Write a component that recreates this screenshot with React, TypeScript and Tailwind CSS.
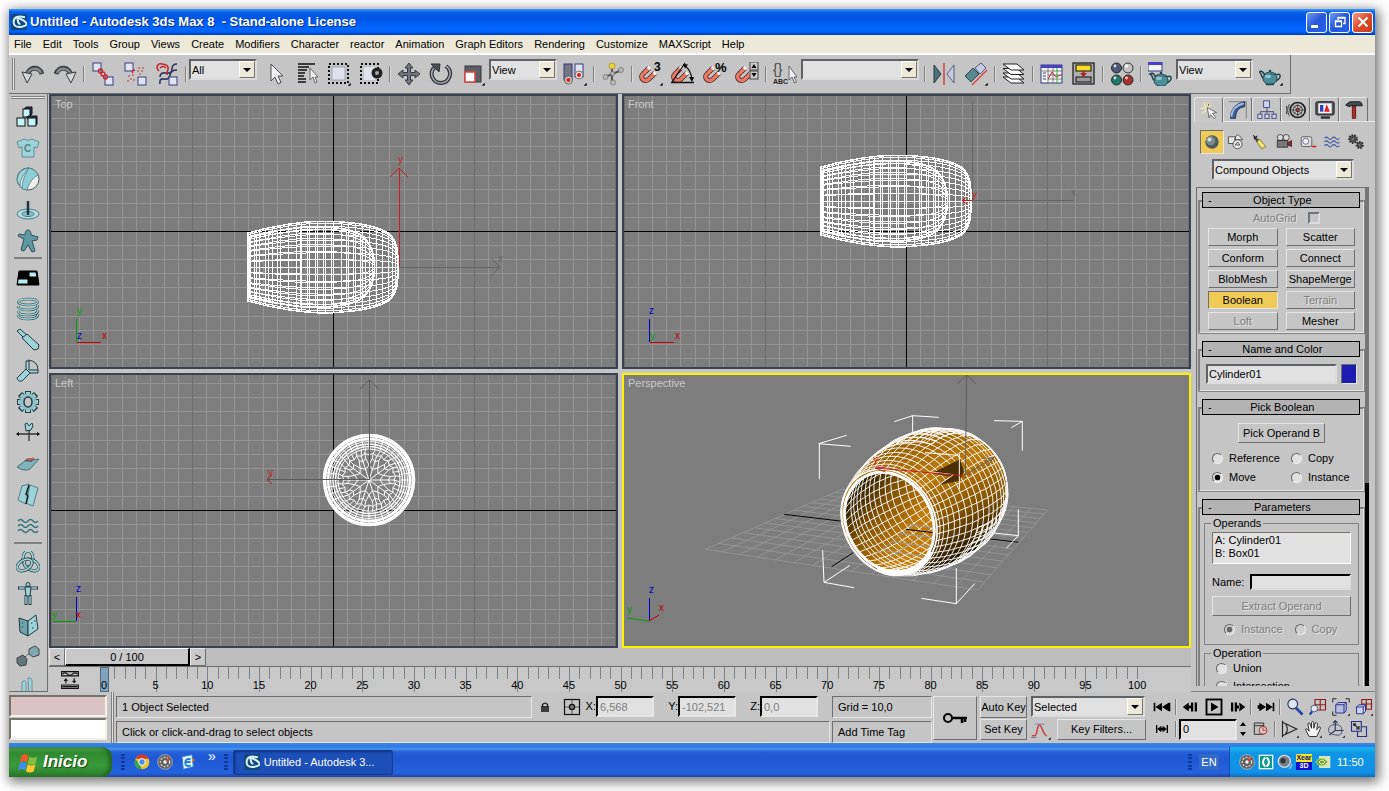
import React from 'react';

const RAISED = 'border border-t-[#e6e6e6] border-l-[#e6e6e6] border-b-[#6e6e6e] border-r-[#6e6e6e]';
const SUNKEN = 'border border-t-[#6e6e6e] border-l-[#6e6e6e] border-b-[#e6e6e6] border-r-[#e6e6e6]';
const FIELD = 'border-2 border-t-[#5f6265] border-l-[#5f6265] border-b-[#dcdcdc] border-r-[#dcdcdc] bg-[#e1e1e1]';

const C = '#9fd3da';
const D = '#21393f';

const Teapot = () => (
  <g>
    <path d="M5 15C3 14 4 10 1 9l2-1c3 1 3 3 4 5M18 12c5-3 6 3 0 6" fill="none" stroke="#1f454c" strokeWidth="1.5" />
    <ellipse cx="12" cy="15.500" rx="7" ry="6" fill="#4b8e98" stroke="#1f454c" />
    <ellipse cx="10" cy="13" rx="3" ry="2" fill="#8fc7cf" />
    <path d="M6 11q6-4 12 0z" fill="#67a8b2" stroke="#1f454c" strokeWidth=".8" />
    <circle cx="12" cy="8" r="1.300" fill="#1f454c" />
    <path d="M8 21.500h8" stroke="#1f454c" strokeWidth="1.500" />
  </g>
);

const Magnet = () => (
  <g fill="none" transform="translate(0 1)">
    <path d="M10 5L4 11c-4 4 2 9 6 5l6-6" stroke="#4a2a26" strokeWidth="5" />
    <path d="M10 5L4 11c-4 4 2 9 6 5l6-6" stroke="#e87863" strokeWidth="3.400" />
    <path d="M9 6l1.800-1.800M14.800 11.200l1.800-1.800" stroke="#f5f5f5" strokeWidth="3.400" />
  </g>
);

const Corner = () => <path d="M24 20v4h-4z" fill="#000" stroke="#fff" strokeWidth=".5" />;

const Box = ({ x, y }: { x: number; y: number }) => (
  <rect x={x} y={y} width="8" height="8" fill="#dfe3f2" stroke="#3a3f7a" />
);

const Wave = ({ c }: { c: string }) => (
  <path d="M2 7q2.500-3 5 0t5 0t5 0t5 0M2 12q2.500-3 5 0t5 0t5 0t5 0M2 17q2.500-3 5 0t5 0t5 0t5 0" fill="none" stroke={c} strokeWidth="1.500" />
);

const icons: Record<string, React.ReactNode> = {
  undo: <g><path d="M6 14C7 5 18 3 21 12" fill="none" stroke="#3b3d40" strokeWidth="5" /><path d="M6 14C7 6 17 4 20 11" fill="none" stroke="#85898d" strokeWidth="2.500" /><path d="M1 10l10 2-5 9z" fill="#d4d7da" stroke="#3b3d40" /></g>,
  redo: <g><path d="M18 14C17 5 6 3 3 12" fill="none" stroke="#3b3d40" strokeWidth="5" /><path d="M18 14C17 6 7 4 4 11" fill="none" stroke="#85898d" strokeWidth="2.500" /><path d="M23 10l-10 2 5 9z" fill="#d4d7da" stroke="#3b3d40" /></g>,
  link: <g><Box x={2} y={1} /><Box x={14} y={15} /><g fill="none" stroke="#c4262b" strokeWidth="1.300"><circle cx="9.500" cy="9" r="2" /><circle cx="12" cy="12" r="2" /><circle cx="14.500" cy="15" r="2" /></g></g>,
  unlink: <g><Box x={2} y={1} /><Box x={15} y={15} /><path d="M10 11q-2-3 2-3" fill="none" stroke="#c4262b" strokeWidth="1.500" /><path d="M15 6h2M19 6h2M14 9h2M18 9h2M16 12h2M5 14h2M9 13h2M7 17h2M4 19h2M10 18h2" stroke="#c0686b" strokeWidth="1.300" /></g>,
  bind: <g fill="none"><path d="M22 2q-5 0-5 5t-6 4-6 4M22 8q-6 0-7 5t-6 4-4 5" stroke="#2b3560" strokeWidth="1.600" /><path d="M4 9C0 5 3 1 7 2s5 0 6 3-2 5-1 8M5 6q3-3 6 0" stroke="#c4262b" strokeWidth="1.600" /><Box x={14} y={15} /></g>,
  arrow: <path d="M8 2v17l4-4 3 7 3-1.500-3-6.500h5z" fill="#f1f1f4" stroke="#4c4c52" />,
  byname: <g><path d="M3 2h17M3 5h11M3 8h9M3 11h7M3 14h6M3 17h8M3 20h8" stroke="#111" strokeWidth="1.400" /><path d="M15 6v12l3-3 2 6 2-1-2-5h3z" fill="#eee" stroke="#4c4c52" strokeWidth=".8" /></g>,
  region: <g><rect x="2" y="2" width="19" height="19" fill="none" stroke="#111" strokeWidth="2" strokeDasharray="2 2" /><rect x="5" y="5" width="13" height="13" fill="#dfe1ec" stroke="#8d90a8" strokeWidth=".7" /><Corner /></g>,
  crossing: <g><rect x="2" y="2" width="17" height="19" fill="none" stroke="#111" strokeWidth="2" strokeDasharray="2 2" /><rect x="5" y="5" width="11" height="13" fill="#dfe1ec" /><circle cx="18" cy="11" r="5.500" fill="#222" /><circle cx="18" cy="11" r="2" fill="#aaa" /></g>,
  move: <path d="M12 1l4 5h-2.500v4.500H18V8l5 4-5 4v-2.500h-4.500V18H16l-4 5-4-5h2.500v-4.500H6V16l-5-4 5-4v2.500h4.500V6H8z" fill="#71747d" stroke="#2f3136" strokeWidth=".9" />,
  rotate: <g fill="none"><path d="M17 4c8 6 3 17-5 17S-1 11 6 5" stroke="#2f3136" strokeWidth="4" /><path d="M17 4c8 6 3 17-5 17S-1 11 6 5" stroke="#a2a5a9" strokeWidth="1.600" /><path d="M2 2l9 0-1 8z" fill="#4c4f54" stroke="#2f3136" /></g>,
  scale: <g><rect x="4" y="4" width="16" height="16" fill="#5d6067" stroke="#33353a" /><rect x="4" y="10" width="10" height="10" fill="#fff" stroke="#e0413c" strokeWidth="1.500" /><Corner /></g>,
  pivot: <g><rect x="1" y="2" width="8" height="16" fill="#74777f" stroke="#333a80" /><rect x="12" y="2" width="8" height="13" fill="#e1e3ee" stroke="#333a80" /><circle cx="5.500" cy="18" r="4" fill="#ccc" stroke="#666" /><circle cx="5.500" cy="18" r="2" fill="#e01c1c" /><circle cx="16" cy="13" r="4" fill="#ddd" stroke="#777" /><circle cx="16" cy="13" r="2" fill="#e01c1c" /><Corner /></g>,
  manip: <g><path d="M11 4v16M4 15l17-7" stroke="#5c5c5c" strokeWidth="2.200" /><circle cx="11" cy="4" r="3" fill="#f2d433" stroke="#8b7a1e" strokeWidth=".6" /><g fill="#bbb" stroke="#666" strokeWidth=".7"><circle cx="20" cy="8" r="2.500" /><circle cx="4.500" cy="15" r="2.500" /><circle cx="12" cy="20.500" r="2.500" /><circle cx="11.500" cy="11.500" r="2" /></g></g>,
  snap: <g><Magnet /><text x="15" y="9" fontSize="12" fontWeight="bold">3</text><Corner /></g>,
  angle: <g><Magnet /><path d="M0 20.500h23M1 20L14 1M14 4q6 4 7 14" fill="none" stroke="#111" strokeWidth="1.300" /><path d="M12 2l5 .5-3 4zM18 15h5l-2 5z" /></g>,
  percent: <g><Magnet /><text x="12" y="10" fontSize="13" fontWeight="bold">%</text></g>,
  spinner: <g><Magnet /><rect x="15" y="0" width="8" height="8" fill="#ccc" stroke="#444" /><rect x="15" y="9" width="8" height="8" fill="#ccc" stroke="#444" /><path d="M16.500 6L19 2l2.500 4zM16.500 11l2.500 4 2.500-4z" /></g>,
  named: <g><text x="0" y="12" fontSize="14" fill="#444">{'{}'}</text><text x="0" y="22" fontSize="7" fontWeight="bold" fill="#222">ABC</text><path d="M16 4v14l3-3 2.500 6 2-1-2.500-5H24z" fill="#f1f1f4" stroke="#55555c" strokeWidth=".9" /></g>,
  mirror: <g><path d="M2 3l7 9-7 9z" fill="#4c7076" stroke="#253b40" /><path d="M22 3l-7 9 7 9z" fill="#c6cbe0" stroke="#5a5f7d" /><path d="M12 1v22" stroke="#cf4a48" strokeWidth="1.600" /></g>,
  align: <g><path d="M1 14l8-8 6 6-8 8z" fill="#5b878e" stroke="#27464c" /><path d="M11 6l6-5 5 5-6 6z" fill="#c6cfe4" stroke="#4c5a80" /><path d="M8 23L23 8" stroke="#e0413c" strokeWidth="1.500" /><Corner /></g>,
  layers: <g fill="#fff" stroke="#222">{[15, 11, 6.500, 2].map((y) => <path key={y} d={`M1 ${y}h14l7 6H9z`} />)}</g>,
  curve: <g><rect x="1" y="3" width="21" height="18" fill="#f4f4f4" stroke="#333a80" /><path d="M1 4.500h21" stroke="#4b3fc5" strokeWidth="3" /><path d="M2 9h20M8 13h14M8 17h14M8 6v15M13 6v15" stroke="#555" strokeWidth=".7" /><path d="M3 11h3M3 14h3M3 17h3" stroke="#333a80" /><path d="M8 17l4-7 4 5 5-2" fill="none" stroke="#d23" /><path d="M17 6v15" stroke="#2ab32a" /></g>,
  schematic: <g><rect x="1" y="1" width="21" height="21" fill="#b0b0b0" stroke="#222" strokeWidth="1.300" /><rect x="4" y="3" width="15" height="6" fill="#f6dd26" stroke="#111" /><rect x="4" y="15" width="15" height="5" fill="#9b9b9b" stroke="#111" /><path d="M11.500 9v3" stroke="#b21f24" strokeWidth="2" /><path d="M8 11h7l-3.500 4z" fill="#b21f24" /></g>,
  material: <g stroke="#111" strokeWidth=".8"><circle cx="6.500" cy="6" r="5" fill="#4e5878" /><circle cx="18" cy="6" r="5" fill="#c3c3c3" /><circle cx="6.500" cy="18" r="5" fill="#23776a" /><circle cx="18" cy="18" r="5" fill="#a6322f" /><g fill="#fff" stroke="none" opacity=".8"><circle cx="5" cy="4" r="1.400" /><circle cx="16.500" cy="4" r="1.800" /><circle cx="5" cy="16" r="1.400" /><circle cx="16.500" cy="16" r="1.400" /></g></g>,
  renderScene: <g><g transform="translate(1 3)"><Teapot /></g><rect x="0" y="0" width="14" height="9" fill="#f4f4f4" stroke="#333a80" /><path d="M0 1.500h14" stroke="#4b3fc5" strokeWidth="3" /></g>,
  render: <g><g transform="translate(-1 1)"><Teapot /></g><Corner /></g>,

  boxes: <g fill="#c3f4f7" stroke="#111"><path d="M8 4l2-2h6v7l-2 2" fill="#335" /><rect x="7" y="4" width="7" height="8" /><path d="M10 13l2-2h9v8l-2 2" fill="#335" /><rect x="1" y="13" width="8" height="8" /><rect x="12" y="13" width="8" height="8" /></g>,
  cloth: <g><path d="M8 3L1 6l2 6 3-1v10h12V11l3 1 2-6-7-3q-4 3-8 0z" fill={C} stroke="#5b8f99" /><text x="8" y="16" fontSize="10" fontWeight="bold" fill="#54808a">C</text></g>,
  ball: <g><circle cx="12" cy="12" r="11" fill="#ededed" stroke="#4b5c60" /><path d="M5 4q4-3 8-3-9 9-9 18-3-4-3-7 1-5 4-8z" fill={C} stroke="#4b7f88" strokeWidth=".8" /><path d="M13 1q6 1 9 7-8 4-11 15l-5-1Q6 11 13 1z" fill="#8fcdd6" stroke="#4b7f88" strokeWidth=".8" /></g>,
  water: <g fill="none" stroke="#447c87"><ellipse cx="12" cy="16" rx="11" ry="5" fill="#b8dde2" /><ellipse cx="12" cy="16" rx="6" ry="2.500" fill="#8ec2ca" /><path d="M12 3v14" stroke="#1d383d" strokeWidth="2.500" /></g>,
  star: <path d="M9 6q0-5 3-5t3 5l7 2-1 3-5 1 3 10-3 1-4-7-4 6-3-1 3-11-6-3 1-2z" fill="#5f98a3" stroke="#2d5058" />,
  checker: <g stroke="#000"><path d="M3 5h18l2 14H1z" fill="#000" /><path d="M13 6h7l1 5h-8zM2 13h10v5H1.500z" fill="#b8ecf0" /></g>,
  spring: <g fill="none" stroke="#2c4c52" strokeWidth="2.600"><ellipse cx="12" cy="5" rx="9.500" ry="3" /><path d="M2 9q0 4 10 4t10-5M2 14q0 4 10 4t10-5M2 18q0 4 10 4t10-5" /><g stroke={C} strokeWidth="1.400"><ellipse cx="12" cy="5" rx="9.500" ry="3" /><path d="M2 9q0 4 10 4t10-5M2 14q0 4 10 4t10-5M2 18q0 4 10 4t10-5" /></g></g>,
  dashpot: <g fill={C} stroke={D}><path d="M1 3l3-2 9 8-3 3z" /><path d="M6 10l5-4 12 11-1 4-4 1z" /></g>,
  motor: <g fill={C} stroke={D}><path d="M12 1q10 1 10 10" fill="none" /><path d="M10 2h3v9h9v3h-9l-3-2z" /><path d="M10 10l4 4-8 8q-4 1-5-3z" /></g>,
  gear: <g><path d="M12 1v22M1 12h22M4 4l16 16M20 4L4 20" stroke={D} strokeWidth="6" /><path d="M12 2v20M2 12h20M5 5l14 14M19 5L5 19" stroke={C} strokeWidth="4" /><circle cx="12" cy="12" r="8.500" fill="#8dbfc8" /><ellipse cx="12" cy="12" rx="4" ry="5" fill="#c5c5c5" stroke={D} strokeWidth="1.500" /></g>,
  wind: <g><path d="M1 13h22M13 8v12" stroke="#333" strokeWidth="1.300" /><path d="M0 13l3-2v4zM24 13l-3-2v4z" /><path d="M9 3l2-1 2 3 3-3 1 3-2 4-5 1z" fill={C} stroke={D} /></g>,
  toycar: <g><path d="M1 15L9 9l14-2-9 10q-5 3-13-2z" fill="#7fb4bd" stroke="#4c6e75" /><path d="M8 9q4-5 11-2l-4 3z" fill="#6b5570" /><path d="M12 8l6-2" stroke="#d2643c" strokeWidth="1.500" /></g>,
  fracture: <g fill={C} stroke="#4b7f88"><path d="M6 3l7-2-3 20-8-4zM14 2l8 3-5 18-7-3z" /><path d="M13 2l-3 9 2 2-2 8" stroke="#222" fill="none" strokeWidth="1.500" /></g>,
  waves: <Wave c="#2f747c" />,
  knot: (
    <g fill="none">
      {[0, 120, 240].map((a) => (
        <g key={a} transform={`rotate(${a} 12 12)`}>
          <ellipse cx="12" cy="8" rx="5" ry="8" stroke={D} strokeWidth="3" />
          <ellipse cx="12" cy="8" rx="5" ry="8" stroke={C} strokeWidth="1.800" />
        </g>
      ))}
    </g>
  ),
  ragdoll: <g><path d="M2 6h20M12 5v8M10 13v10M14 13v10" stroke={D} strokeWidth="3" /><path d="M3 6h18M10 14v8M14 14v8" stroke={C} strokeWidth="1.400" /><path d="M9 5h6l-1 9h-4z" fill={C} stroke={D} /><circle cx="12" cy="2.500" r="2" fill={C} stroke={D} /></g>,
  hinge: <g fill={C} stroke={D}><path d="M3 5l9 3v15l-8-4z" fill="#6fa3ad" /><path d="M12 8l8-6 2 14-10 7z" /><path d="M6 10h1M6 14h1M15 10h1.500M18 8h1.500M16 15h1.500" /></g>,
  p2p: <g stroke="#444"><path d="M9 13l6-5" strokeDasharray="2 1" /><path d="M1 14l6-3 4 4-1 6-6 1-3-3z" fill="#64777a" /><path d="M13 5l6-3 4 3v6l-6 2-4-3z" fill="#7fa9b0" /></g>,
  carwheel: <g fill={C} stroke="#6a9098"><path d="M6 7q3-3 4 0v14H6zM12 3q3-1 4 2v14l-3 2z" /></g>,

  create: <g><path d="M10 12V5l2-2M6 3l2 7M2 10h6M4 16l5-4M14 6l-4 4" stroke="#f5e8b0" strokeWidth="1.500" /><path d="M10 9l11 6-5 1 4 5-2 1.500-4-5-2 4z" fill="#fff" stroke="#555" /></g>,
  modify: <g><path d="M3 22Q3 5 20 2v6Q9 9 9 22z" fill="#3e5f9d" stroke="#16264d" /><path d="M4 20Q5 7 19 4" stroke="#a9bde3" fill="none" strokeWidth="2" /><path d="M1 2h21v20" fill="none" stroke="#555" strokeWidth=".7" /></g>,
  hierarchy: <g fill="#cfd4ee" stroke="#353c75"><path d="M12 8v8M4 17v-3h16v3" fill="none" /><rect x="8" y="1" width="7" height="8" /><rect x="1" y="17" width="5" height="5" /><rect x="9.500" y="17" width="5" height="5" /><rect x="18" y="17" width="5" height="5" /></g>,
  motion: <g fill="none" stroke="#222"><circle cx="14" cy="12" r="9" strokeWidth="2" /><circle cx="14" cy="12" r="5.500" /><path d="M14 4v16M6 12h16M8.500 6.500l11 11M19.500 6.500l-11 11" strokeWidth=".8" /><circle cx="14" cy="12" r="2" fill="#d33" /><path d="M4 5q-4 7 0 14M1 7q-2 5 0 10" /></g>,
  display: <g><rect x="1" y="2" width="22" height="16" rx="2" fill="#555" stroke="#111" /><rect x="4" y="4" width="16" height="12" fill="#f2f2ff" /><path d="M6 6h4v8H6z" fill="#2b44c4" /><path d="M14 5l4 9h-7z" fill="#d22" /><path d="M7 21h11" stroke="#333" strokeWidth="3" /></g>,
  utilities: <g><path d="M10 7h4v15h-4z" fill="#b02a25" stroke="#541310" /><path d="M2 6q4-5 9-4h8q3 1 3 5h-5q-8-1-11 1z" fill="#3f4b50" stroke="#111" /></g>,
  sphere: <g><circle cx="12" cy="12" r="8" fill="#4d5a5e" /><circle cx="10.500" cy="10.500" r="5.500" fill="#7e8a8d" /><circle cx="9" cy="9" r="2.500" fill="#d5dcdd" /></g>,
  shapes: <g fill="#e7e7e7" stroke="#333"><path d="M2 5h9v9H2zM12 4l3-2 6 7H10z" /><circle cx="14" cy="15" r="6" /><path d="M14 12l3 4h-6z" /></g>,
  lights: <g><path d="M3 3l8 7-3 2z" fill="#555" stroke="#222" /><path d="M11 8l9 10-6 3L8 12z" fill="#f4e36b" stroke="#6a6122" /><path d="M4 8l4-4" stroke="#222" strokeWidth="2" /></g>,
  cameras: <g stroke="#222"><circle cx="7" cy="6" r="4" fill="#ddd" /><circle cx="15" cy="6" r="4" fill="#ddd" /><path d="M3 10h14v9H3z" fill="#777" /><path d="M17 13l5-3v8l-5-2z" fill="#a22" /></g>,
  helpers: <g><rect x="3" y="5" width="14" height="13" rx="2" fill="#ddd" stroke="#444" /><circle cx="9" cy="11" r="4" fill="#eef" stroke="#556" /><path d="M17 18h6" stroke="#c22" strokeWidth="2" /></g>,
  space: <Wave c="#3d56a8" />,
  systems: <g fill="#555" stroke="#333"><circle cx="8" cy="8" r="5" strokeDasharray="2 1.500" strokeWidth="3" /><circle cx="17" cy="16" r="4" strokeDasharray="2 1.500" strokeWidth="3" /><circle cx="8" cy="8" r="1.500" fill="#ddd" /><circle cx="17" cy="16" r="1.300" fill="#ddd" /></g>,

  trackcurve: <g fill="none" stroke="#111" strokeWidth="1.400"><path d="M2 2h20v5H2zM2 18h20v4H2z" /><path d="M3 5q3-3 6 0t6 0 6 0M3 20h18M7 16v-5M5 13l2-2 2 2M17 10v5M15 13l2 2 2-2" /></g>,
  lock: <g><path d="M7 12V7q5-6 10 0v5" fill="none" stroke="#222" strokeWidth="2.500" /><path d="M4 12h16M4 16h16M4 20h16" stroke="#111" strokeWidth="3" /></g>,
  absmode: <g fill="none" stroke="#111" strokeWidth="1.600"><rect x="2" y="2" width="20" height="20" /><path d="M12 2v20M2 12h20" strokeWidth=".8" /><circle cx="12" cy="12" r="3.500" fill="#777" /></g>,
  key: <g><circle cx="5" cy="12" r="4" fill="none" stroke="#000" strokeWidth="2" /><path d="M9 12h15M19 12v5M22 12v4" stroke="#000" strokeWidth="2.500" /></g>,
  tangent: <g fill="none"><path d="M1 19h3c4 0 3-13 6-13s5 13 9 13" stroke="#cf3c3c" strokeWidth="1.800" /><path d="M5 5h11M0 21h7" stroke="#6c70a8" /><Corner /></g>,
  goStart: <path d="M2 7h2v10H2zM4 12l8-5v10zM12 12l8-5v10zM20 7h2v10h-2z" />,
  prev: <path d="M1 12l8-6v12zM8 10h4v4H8zM12 6h3v12h-3zM17 6h3v12h-3z" />,
  play: <g><rect x="2" y="2" width="20" height="20" fill="none" stroke="#000" strokeWidth="2.500" /><path d="M8 6l10 6-10 6z" /></g>,
  next: <path d="M23 12l-8-6v12zM12 10h4v4h-4zM9 6h3v12H9zM4 6h3v12H4z" />,
  goEnd: <path d="M22 7h-2v10h2zM20 12l-8-5v10zM12 12L4 7v10zM4 10H2v4h2z" />,
  keymode: <path d="M3 6h2v12H3zM5 12l6-5v10zM19 12l-6-5v10zM19 6h2v12h-2zM11 10h2v4h-2z" />,
  timeconfig: <g fill="none"><path d="M2 3h14v17H2zM2 7h14" stroke="#333" strokeWidth="1.500" /><circle cx="15" cy="14" r="6" fill="#d5c5c5" stroke="#a33" strokeWidth="1.500" /><path d="M15 10v4h4" stroke="#a33" strokeWidth="1.300" /></g>,
  zoom: <g><circle cx="9" cy="8" r="6.500" fill="#dfe6f5" stroke="#2b3560" strokeWidth="1.500" /><path d="M13 13l9 9" stroke="#2244a0" strokeWidth="3.500" /></g>,
  zoomAll: <g fill="none"><path d="M8 2h14v14H8zM15 2v14M8 9h14" stroke="#8d1d1d" strokeWidth="1.500" /><circle cx="7" cy="14" r="4.500" fill="#dfe6f5" stroke="#2b3560" /><path d="M4 18l-3 4" stroke="#2244a0" strokeWidth="3" /></g>,
  extents: <g fill="none"><path d="M5 9l3-3h11v11l-3 3H5zM5 9h11v11M16 9l3-3" fill="#b6bfdf" stroke="#2a2f8a" strokeWidth="1.300" /><path d="M1 6V1h5M18 1h5v5M1 18v5h5" stroke="#222" strokeWidth="1.300" /><Corner /></g>,
  extentsAll: <g fill="none"><path d="M9 2h13v13H9zM15 2v13M9 8h13" stroke="#8d1d1d" strokeWidth="1.500" /><path d="M2 12l3-3h9v9l-3 3H2zM2 12h9v9M11 12l3-3" fill="#cfd5ee" stroke="#2a2f8a" strokeWidth="1.300" /><Corner /></g>,
  fov: <g><path d="M2 1v22M2 3l19 9-19 9M6 5q5 7 0 14" fill="none" stroke="#222" strokeWidth="1.500" /><Corner /></g>,
  pan: <g><path d="M7 22L2 13q0-2 2-1l3 3L5 5q2-2 3 0l2 6V3q2-2 3 0v8l2-7q2-1 3 1l-1 8 3-4q2 0 2 2l-5 11z" fill="#f4f4f4" stroke="#222" strokeWidth="1.200" /><Corner /></g>,
  orbit: <g fill="none" stroke="#2b3560" strokeWidth="1.500"><path d="M11 1v13L3 20M11 14h11" /><path d="M2 14q0-8 9-8t9 8-9 6-9-6" strokeWidth="1" /><path d="M8 4l3-3 3 3" /><Corner /></g>,
  maxview: <g fill="none" stroke="#2a2f8a" strokeWidth="1.500"><path d="M2 2h13v13H2zM15 9h7v13H10v-7" /><path d="M5 5l7 7M12 8v4H8M5 8V5h3" stroke="#222" /></g>,

  max: <g><rect width="24" height="24" rx="2" fill="#12477d" /><path d="M21 5Q5 1 4 11t12 8 3-9-9-1 4 6" fill="none" stroke="#d7f1fb" strokeWidth="3" /></g>,
  chrome: <g><circle cx="12" cy="12" r="11" fill="#f0c62c" /><path d="M2 7a11 11 0 0120 0H12z" fill="#d9392a" /><path d="M2 7l6 8 4 8A11 11 0 012 7z" fill="#37a34a" /><circle cx="12" cy="12" r="5" fill="#4c8bf0" stroke="#fff" strokeWidth="1.500" /></g>,
  gauge: <g><circle cx="12" cy="12" r="11" fill="#62605e" stroke="#c9c9c9" /><circle cx="12" cy="12" r="7" fill="none" stroke="#d8d8d8" strokeWidth="2" strokeDasharray="3 2" /><path d="M12 12l7-7" stroke="#e23a2a" strokeWidth="2" /><circle cx="12" cy="12" r="2.500" fill="#fff" /></g>,
  outlook: <g><path d="M3 4l15-3 2 18-15 4z" fill="#e8f3fb" stroke="#2786c9" strokeWidth="1.500" /><path d="M16 8q-8-2-8 5t8 4M8 12h8" fill="none" stroke="#1e7fd0" strokeWidth="3" /><path d="M18 6l5 3-5 3" fill="#e2702a" /></g>,
  tablet: <g><rect x="1" y="1" width="22" height="22" fill="#e9f7f5" /><rect x="3" y="3" width="18" height="18" fill="#109a8c" /><path d="M11 5q-7 7 0 14M13 5q7 7 0 14" fill="none" stroke="#fff" strokeWidth="3" /></g>,
  volume: <g><circle cx="11" cy="11" r="9" fill="#777c85" stroke="#d6d9de" strokeWidth="2" /><circle cx="9" cy="10" r="4" fill="#333" /><path d="M18 22q4-2 4-7" stroke="#9fb6dc" strokeWidth="2" fill="none" /></g>,
  nvidia: <g><rect x="6" y="3" width="17" height="18" fill="#d8e6bd" /><path d="M1 12q9-12 18 0-9 12-18 0z" fill="#6ba312" stroke="#e6f2cf" /><path d="M6 12q5-6 9 0-5 6-9 0z" fill="none" stroke="#fff" strokeWidth="1.500" /></g>,
  flag: <g><path d="M4 4q4-3 8 0l-2 8q-4-3-8 0z" fill="#ee5a28" /><path d="M13 5q4 3 9 0l-2 8q-4 3-9 0z" fill="#86c040" /><path d="M2 13q4-3 8 0l-2 8q-4-3-8 0z" fill="#3f8df0" /><path d="M11 14q4 3 9 0l-2 8q-4 3-9 0z" fill="#fbc92d" /></g>,
};

const Icon = ({ name, className = 'size-6' }: { name: string; className?: string }) => (
  <svg viewBox="0 0 24 24" className={`shrink-0 ${className}`} aria-hidden="true">{icons[name]}</svg>
);

const ToolButton = ({ name }: { name: string }) => (
  <button type="button" aria-label={name} className="flex w-8 shrink-0 items-center justify-center">
    <Icon name={name} />
  </button>
);

const Sep = () => (
  <div className="flex w-[6px] shrink-0 justify-center self-center">
    <div className="h-4 w-[2px] border-l border-[#808080] bg-[#dcdcdc]" />
  </div>
);

const Dropdown = ({ label, value, className }: { label: string; value: string; className: string }) => (
  <label className={`flex h-[21px] shrink-0 ${FIELD} ${className}`}>
    <select aria-label={label} className="min-w-0 flex-1 appearance-none bg-transparent pl-[1px] text-[11px] leading-4 outline-none">
      <option>{value}</option>
    </select>
    <span className="flex w-4 items-center justify-center border border-t-white border-l-white border-b-[#77736a] border-r-[#77736a] bg-[#ece9d8]">
      <svg viewBox="0 0 8 4" className="h-1 w-2"><path d="M0 0h8L4 4z" /></svg>
    </span>
  </label>
);

const menus = ['File', 'Edit', 'Tools', 'Group', 'Views', 'Create', 'Modifiers', 'Character', 'reactor', 'Animation', 'Graph Editors', 'Rendering', 'Customize', 'MAXScript', 'Help'];

const TitleBar = () => (
  <header className="flex h-[26px] shrink-0 items-center bg-[linear-gradient(#3b9bff,#0a5fe8_12%,#0054e3_35%,#0066ff_75%,#0062f5_88%,#0038b8)] px-[2px]">
    <Icon name="max" className="size-4" />
    <h1 className="ml-[3px] flex-1 whitespace-pre text-[13px] font-bold text-white [text-shadow:1px_1px_#0b2f8a]">
      Untitled - Autodesk 3ds Max 8  - Stand-alone License
    </h1>
    <div className="flex gap-[2px]">
      <button type="button" aria-label="Minimize" className="flex size-[21px] items-end rounded-[3px] border border-white bg-[linear-gradient(135deg,#6f9bf5,#2456d8_50%,#2a60e8)] p-1">
        <span className="h-[3px] w-[7px] bg-white" />
      </button>
      <button type="button" aria-label="Restore" className="flex size-[21px] items-center justify-center rounded-[3px] border border-white bg-[linear-gradient(135deg,#6f9bf5,#2456d8_50%,#2a60e8)]">
        <svg viewBox="0 0 12 12" className="size-3" fill="none" stroke="#fff"><path d="M4 2h7M4 1.500h7v6H9M4 1v3M1 5h7M1.500 5.500h6v5h-6z" strokeWidth="1.300" /></svg>
      </button>
      <button type="button" aria-label="Close" className="flex size-[21px] items-center justify-center rounded-[3px] border border-white bg-[linear-gradient(135deg,#f0a08c,#dd4b2a_50%,#c93a14)]">
        <svg viewBox="0 0 12 12" className="size-3" stroke="#fff" strokeWidth="2"><path d="M1.500 1.500l9 9M10.500 1.500l-9 9" /></svg>
      </button>
    </div>
  </header>
);

const MainToolbar = () => (
  <div className="flex h-[39px] w-fit shrink-0 items-stretch border-r border-b border-[#6e6e6e] pr-[3px]">
    <div className="my-[3px] mr-[2px] ml-[3px] w-[3px] border-x border-[#808080] bg-[#e6e6e6]" />
    <ToolButton name="undo" />
    <ToolButton name="redo" />
    <Sep />
    <ToolButton name="link" />
    <ToolButton name="unlink" />
    <ToolButton name="bind" />
    <Sep />
    <Dropdown label="Selection filter" value="All" className="mt-1 mr-[2px] w-[68px]" />
    <ToolButton name="arrow" />
    <ToolButton name="byname" />
    <ToolButton name="region" />
    <ToolButton name="crossing" />
    <Sep />
    <ToolButton name="move" />
    <ToolButton name="rotate" />
    <ToolButton name="scale" />
    <Dropdown label="Reference coordinate system" value="View" className="mt-1 mr-[2px] w-[68px]" />
    <ToolButton name="pivot" />
    <Sep />
    <ToolButton name="manip" />
    <Sep />
    <ToolButton name="snap" />
    <ToolButton name="angle" />
    <ToolButton name="percent" />
    <ToolButton name="spinner" />
    <Sep />
    <ToolButton name="named" />
    <Dropdown label="Named selection sets" value="" className="mt-1 mr-[3px] w-[118px]" />
    <Sep />
    <ToolButton name="mirror" />
    <ToolButton name="align" />
    <Sep />
    <ToolButton name="layers" />
    <Sep />
    <ToolButton name="curve" />
    <ToolButton name="schematic" />
    <Sep />
    <ToolButton name="material" />
    <Sep />
    <ToolButton name="renderScene" />
    <Dropdown label="Render type" value="View" className="mt-1 mr-[2px] w-[77px]" />
    <ToolButton name="render" />
  </div>
);

const reactorGroups = [
  ['boxes', 'cloth', 'ball', 'water', 'star'],
  ['checker', 'spring', 'dashpot', 'motor', 'gear', 'wind', 'toycar', 'fracture', 'waves'],
  ['knot', 'ragdoll', 'hinge', 'p2p', 'carwheel'],
];

const ReactorBar = () => (
  <aside className="flex h-full min-h-0 w-[39px] shrink-0 flex-col overflow-hidden border-r border-b border-[#6e6e6e]">
    <div className="mx-[2px] mt-[2px] mb-[2px] h-[3px] shrink-0 border-y border-[#808080] bg-[#e6e6e6]" />
    {reactorGroups.map((group, i) => (
      <div key={group[0]} className={i > 0 ? 'mx-[5px] mt-[1px] border-t-2 border-[#808080] pt-[3px]' : 'mx-[5px]'}>
        {group.map((name) => (
          <button key={name} type="button" aria-label={name} className="flex h-[31px] w-full items-center justify-center">
            <Icon name={name} />
          </button>
        ))}
      </div>
    ))}
  </aside>
);

// radius along the barrel axis: [distance from open end, radius]
const outer = [[0, 34], [3, 34.600], [7, 35.800], [12, 37], [18, 38.700], [25, 40], [33, 41.500], [41, 43], [49, 44], [54, 44.700], [62, 45.500], [70, 46], [78, 46], [86, 46], [94, 45.500], [101, 44.500], [108, 44], [115, 43], [122, 41.500], [129, 39.800], [135, 37.500], [141, 34.500], [145, 31], [148, 26], [150, 20], [151, 12], [152, 0]];
const inner = [[2, 30], [9, 31.500], [21, 34], [30, 36.500], [53, 40], [60, 40.500], [68, 40.500], [76, 40.500], [84, 40], [99, 38], [106, 36], [113, 33], [118, 29], [122, 24], [125, 18], [127, 10], [128, 0]];

const sidePath = (profile: number[][], steps: number) => {
  let d = '';
  profile.forEach(([x, r]) => { d += `M${x} ${-r}V${r}`; });
  for (let i = 0; i <= steps; i++) {
    const s = Math.sin(-Math.PI / 2 + (Math.PI * i) / steps);
    d += 'M' + profile.map(([x, r]) => `${x} ${(r * s).toFixed(1)}`).join('L');
  }
  return d;
};

const SideBarrel = ({ x, y }: { x: number; y: number }) => (
  <g transform={`translate(${x} ${y})`} fill="none" stroke="#fff" shapeRendering="crispEdges">
    <path d={sidePath(outer, 20)} />
    <path d={sidePath(inner, 16)} />
    <path d="M1 -34V34" strokeWidth="2" />
  </g>
);

const GridLines = () => {
  const minor: React.ReactNode[] = [];
  for (let i = -20; i <= 20; i++) {
    const p = i * 14.1;
    const stroke = i === 0 ? '#000' : i % 10 === 0 ? '#6e6e6e' : '#949494';
    minor.push(<path key={`v${i}`} d={`M${282.500 + p} -20V300`} stroke={stroke} />);
    if (Math.abs(i) < 10) minor.unshift(<path key={`h${i}`} d={`M-20 ${135.500 + p}H600`} stroke={stroke} />);
  }
  return <g shapeRendering="crispEdges">{minor}<path d="M-20 135.500H600" stroke="#000" /></g>;
};

const Viewport = ({ name, active, children }: { name: string; active?: boolean; children: React.ReactNode }) => (
  <section aria-label={name} className={`min-h-0 min-w-0 overflow-hidden border-2 bg-[#7d7d7d] ${active ? 'border-[#fff200]' : 'border-[#3a4250]'}`}>
    <svg viewBox="0 0 565 271" preserveAspectRatio="xMidYMid slice" className="size-full" fontSize="10">
      {children}
      <text x="4" y="12" fontSize="11" fill="#c9c9c9">{name}</text>
    </svg>
  </section>
);

const TopView = () => (
  <Viewport name="Top">
    <GridLines />
    <SideBarrel x={196} y={171} />
    <path d="M348.500 171V72M339 81l9-9 9 9" fill="none" stroke="#c81e1e" />
    <path d="M348 171.500h101M440 162l9 9-9 9" fill="none" stroke="#666" />
    <text x="347" y="67" fill="#c81e1e">y</text>
    <text x="447" y="166" fill="#666">x</text>
    <path d="M25.500 223v23" stroke="#00a000" /><path d="M26 246.500h24" stroke="#c80000" />
    <text x="26" y="218" fill="#00a000">y</text><text x="26" y="243" fill="#0000c8">z</text><text x="51" y="243" fill="#c80000">x</text>
  </Viewport>
);

const FrontView = () => (
  <Viewport name="Front">
    <GridLines />
    <SideBarrel x={196} y={105} />
    <path d="M348.500 105V5M348 104.500h101" stroke="#666" />
    <path d="M338 104.500h10M343 101l-5 3.500 5 3.500" fill="none" stroke="#c81e1e" />
    <text x="348" y="102" fill="#c81e1e">y</text>
    <text x="447" y="100" fill="#666">x</text>
    <path d="M25.500 223v23" stroke="#0000c8" /><path d="M26 246.500h24" stroke="#c80000" />
    <text x="25" y="218" fill="#0000c8">z</text><text x="26" y="243" fill="#00a000">y</text><text x="51" y="243" fill="#c80000">x</text>
  </Viewport>
);

const capPath = () => {
  let d = '';
  const at = (r: number, deg: number) => {
    const a = (deg * Math.PI) / 180;
    return `${(r * Math.cos(a)).toFixed(1)} ${(r * Math.sin(a)).toFixed(1)}`;
  };
  for (let a = 0; a < 360; a += 36) {
    d += `M0 0L${at(11, a)}L${at(15, a + 18)}L${at(11, a + 36)}`;
    d += `M${at(11, a)}L${at(19, a)}L${at(22, a + 9)}L${at(15, a + 18)}L${at(22, a + 27)}L${at(19, a + 36)}`;
    d += `M${at(22, a + 9)}L${at(27, a + 9)}L${at(25, a + 18)}L${at(27, a + 27)}L${at(22, a + 27)}`;
    d += `M${at(19, a)}L${at(25, a)}M${at(27, a - 9)}L${at(25, a)}L${at(27, a + 9)}`;
    d += `M${at(25, a)}L${at(32, a + 4)}M${at(27, a + 9)}L${at(32, a + 12)}M${at(25, a + 18)}L${at(32, a + 20)}M${at(27, a + 27)}L${at(32, a + 30)}`;
  }
  for (let a = 0; a < 360; a += 10) d += `M${at(32, a)}L${at(46, a)}`;
  return d;
};

const LeftView = () => (
  <Viewport name="Left">
    <GridLines />
    <g transform="translate(318 105)" fill="none" stroke="#fff">
      <path d={capPath()} />
      <circle r="44.500" strokeWidth="3.500" /><circle r="41" strokeWidth="2.500" /><circle r="38.500" />
      <circle r="36" strokeWidth="1.300" /><circle r="33.500" strokeWidth="1.300" /><circle r="31" />
    </g>
    <path d="M318.500 105V5M309 14l9.500-9 9.500 9M318 104.500H216" fill="none" stroke="#595959" />
    <path d="M221 100l-5 4.500 5 4.500" fill="none" stroke="#8c3030" />
    <text x="217" y="101" fill="#c81e1e">y</text>
    <path d="M25.500 222v24" stroke="#0000c8" /><path d="M2 246.500h23" stroke="#00a000" />
    <text x="25" y="217" fill="#0000c8">z</text><text x="1" y="243" fill="#00a000">y</text><text x="25" y="243" fill="#c80000">x</text>
  </Viewport>
);

// perspective barrel: rings are ellipses strung along a projected axis
const AX = { x: 0.872, y: -0.489 };
const ringRadius = (t: number) => {
  const pts = [[0, 167], [0.12, 184], [0.3, 201], [0.5, 207], [0.68, 198], [0.84, 172], [0.95, 138], [1.01, 100], [1.04, 40]];
  for (let i = 1; i < pts.length; i++) {
    if (t <= pts[i][0]) {
      const k = (t - pts[i - 1][0]) / (pts[i][0] - pts[i - 1][0]);
      return pts[i - 1][1] + k * (pts[i][1] - pts[i - 1][1]);
    }
  }
  return 40;
};
const ringPoint = (t: number, deg: number, k = 1) => {
  const a = (deg * Math.PI) / 180;
  const R = ringRadius(t) * k;
  const u = R * Math.cos(a);
  const w = R * 0.82 * Math.sin(a);
  const x = 598 + 245 * t + u * -AX.y + w * AX.x;
  const y = 456 - 135 * t + u * AX.x + w * AX.y;
  return `${x.toFixed(0)} ${y.toFixed(0)}`;
};
const range = (a: number, b: number, s: number) => {
  const out: number[] = [];
  for (let v = a; v <= b + 0.0001; v += s) out.push(v);
  return out;
};
const wall = (from: number, to: number, k: number, ts: number[]) => {
  const rings = ts.map((t) => 'M' + range(from, to, 5).map((a) => ringPoint(t, a, k)).join('L'));
  const ribs = range(from, to, 7.5).map((a) => 'M' + range(0, 0.92, 0.04).map((t) => ringPoint(t, a, k)).join('L'));
  return rings.join('') + ribs.join('');
};
const ringTs = [0.02, 0.05, 0.09, 0.14, 0.19, 0.25, 0.31, 0.37, 0.43, 0.49, 0.55, 0.61, 0.67, 0.73, 0.79, 0.84, 0.88, 0.92];
const silhouettes = range(0, 1.04, 0.04).map((t) => 'M' + range(0, 355, 5).map((a) => ringPoint(t, a)).join('L') + 'Z').join('');
const mouth = 'M' + range(0, 355, 5).map((a) => ringPoint(0, a, 0.93)).join('L') + 'Z';

const groundPath = () => {
  const warp = (s: number, a: number) => (a * s) / (1 + (a - 1) * s);
  const mix = (p: number[], q: number[], k: number) => [p[0] + (q[0] - p[0]) * k, p[1] + (q[1] - p[1]) * k];
  const L = [45, 538], T = [455, 358], R = [1073, 420], B = [863, 660];
  let d = '';
  for (let i = 0; i <= 14; i++) {
    const u = warp(i / 14, 1.41);
    d += `M${mix(L, T, u)}L${mix(B, R, u)}`;
    const v = warp(i / 14, 0.87);
    d += `M${mix(L, B, v)}L${mix(T, R, v)}`;
  }
  return d;
};

const PerspectiveView = () => (
  <Viewport name="Perspective" active>
    <defs>
      <linearGradient id="skin" gradientUnits="userSpaceOnUse" x1="680" y1="180" x2="850" y2="560">
        <stop offset="0" stopColor="#8f5a04" /><stop offset=".35" stopColor="#bd7b0c" /><stop offset=".65" stopColor="#855403" /><stop offset="1" stopColor="#140c00" />
      </linearGradient>
      <linearGradient id="hollow" gradientUnits="userSpaceOnUse" x1="510" y1="320" x2="690" y2="450">
        <stop offset="0" stopColor="#1f1400" /><stop offset=".5" stopColor="#845403" /><stop offset="1" stopColor="#c27c0a" />
      </linearGradient>
      <clipPath id="mouth"><path d={mouth} /></clipPath>
    </defs>
    <g transform="translate(66 -5) scale(.33333)" fill="none" strokeWidth="3">
      <path d={groundPath()} stroke="#979797" strokeWidth="2.500" />
      <path d="M283 433L985 517M425 590L490 548" stroke="#000" />
      <path d={silhouettes} stroke="#fff" strokeWidth="5" />
      <path d={silhouettes} fill="url(#skin)" />
      <path d={wall(-15, 195, 1, ringTs)} stroke="#fff" strokeWidth="2.800" />
      <path d={mouth} fill="url(#hollow)" />
      <g clipPath="url(#mouth)">
        <path d={wall(170, 370, 0.93, ringTs.slice(3))} stroke="#fff" strokeWidth="2.800" />
        <path d="M650 462l100 14M630 490l110 14M605 515l120 16M585 543l120 16M680 460l-120 90M720 480l-130 90" stroke="#999" />
        <path d="M648 478l90 11" stroke="#000" />
      </g>
      <path d={'M' + range(0, 355, 5).map((a) => ringPoint(0, a, 0.99)).join('L') + 'Z'} stroke="#fff" strokeWidth="5" />
      <path d={mouth} stroke="#fff" strokeWidth="9" />
      <path d={'M' + range(-50, 30, 5).map((a) => ringPoint(0, a, 0.96)).join('L')} stroke="#fff" strokeWidth="16" />
      <path d="M725 310l85-42 12 36-14 28-65 14 40-26z" fill="#4a2f02" />
      <path d="M720 306l70 8-45 32M808 252v106M705 248l100 8" stroke="#fff" />
      <path d="M613 155l55-18 78 5M668 137v54M912 152l85 2v88M964 173l33-19M470 196l-84 25 96 8M388 221v107M398 541l4 96 90 16M402 637l78-51M694 685l105 16V594M799 701l55-60M903 488l82 9V418M949 535l36-38" stroke="#fff" />
      <path d="M830 15l-4 300M802 41l28-26 27 26M826 315l85-52M880 265l31-2-18 24" stroke="#5f5f5f" />
      <path d="M822 317l-266-23 34-4M556 294l30 12" stroke="#c81e1e" />
      <text x="549" y="280" fontSize="30" fill="#c81e1e" stroke="none">y</text>
    </g>
    <path d="M25.500 223v23" stroke="#0000c8" /><path d="M25 246l-22-3" stroke="#00a000" /><path d="M25 246l10-6" stroke="#c80000" />
    <text x="25" y="218" fill="#0000c8">z</text><text x="3" y="238" fill="#00a000">y</text><text x="35" y="236" fill="#c80000">x</text>
  </Viewport>
);

const TimeSlider = () => (
  <div className="flex h-[19px] shrink-0 border-b border-[#6e6e6e] bg-[#bdbdbd] leading-4">
    <button type="button" className={`w-4 ${RAISED} bg-[#c8c8c8]`}>&lt;</button>
    <button type="button" className="w-[125px] border border-t-white border-l-white border-r-2 border-b-2 border-r-black border-b-black bg-[#c8c8c8] leading-[14px]">0 / 100</button>
    <button type="button" className={`w-4 ${RAISED} bg-[#c8c8c8]`}>&gt;</button>
  </div>
);

const TrackBar = () => (
  <div className="flex h-[25px] shrink-0 bg-[#c8c8c8]">
    <button type="button" aria-label="Open mini curve editor" className="flex w-[42px] items-center justify-center"><Icon name="trackcurve" className="size-5" /></button>
    <div className="mr-[54px] ml-[13px] flex flex-1">
      {Array.from({ length: 20 }, (_, i) => (
        <div key={i} className="min-w-0 flex-1">
          <div className="grid h-3 grid-cols-5">
            {[0, 1, 2, 3, 4].map((n) => <div key={n} className="border-l border-[#7d8286]" />)}
          </div>
          <div className={`-ml-3 flex w-6 justify-center leading-[13px] ${i === 0 ? '' : 'bg-[linear-gradient(#7d8286,#7d8286)] bg-[size:1px_100%] bg-[position:12px_0] bg-no-repeat'}`}>
            {i === 0 ? <span className="-mt-3 w-[9px] border border-[#4d6a80] bg-[#7fa3bd] pt-3 text-center leading-[11px]">0</span> : i * 5}
          </div>
        </div>
      ))}
      <div className="w-0">
        <div className="h-3 w-px bg-[#7d8286]" />
        <div className="-ml-3 flex w-6 justify-center leading-[13px]">100</div>
      </div>
    </div>
  </div>
);

const Rollout = ({ title, children }: { title: string; children: React.ReactNode }) => (
  <section className="mb-[7px]">
    <button type="button" className="relative mx-1 flex h-4 w-[158px] items-center border border-black bg-[#b3b3b3] pl-[5px] leading-[14px]">
      <span>-</span>
      <span className="flex-1 pr-[6px] text-center">{title}</span>
    </button>
    <div className="-mt-2 border-2 border-[#808080] border-r-[#e6e6e6] border-b-[#e6e6e6] pt-2 outline -outline-offset-1 outline-[#808080]">{children}</div>
  </section>
);

const Radio = ({ group, label, checked, disabled, className = '' }: { group: string; label: string; checked?: boolean; disabled?: boolean; className?: string }) => (
  <label className={`flex items-center ${disabled ? 'text-[#7d7d7d] [text-shadow:1px_1px_#e2e2e2]' : ''} ${className}`}>
    <input
      type="radio"
      name={group}
      defaultChecked={checked}
      disabled={disabled}
      className="mr-[6px] size-[11px] shrink-0 appearance-none rounded-full border border-t-[#666] border-l-[#666] border-b-[#eee] border-r-[#eee] bg-[#e1e1e1] checked:bg-[radial-gradient(circle,#000_40%,#e1e1e1_50%)] disabled:bg-[#cfcfcf] checked:disabled:bg-[radial-gradient(circle,#666_40%,#cfcfcf_50%)]"
    />
    {label}
  </label>
);

const objectTypes = ['Morph', 'Scatter', 'Conform', 'Connect', 'BlobMesh', 'ShapeMerge', 'Boolean', 'Terrain', 'Loft', 'Mesher'];
const disabledTypes = ['Terrain', 'Loft'];

const CommandPanel = () => (
  <aside className="flex h-full min-h-0 w-[184px] shrink-0 flex-col overflow-hidden border-b border-[#808080] pl-[3px]">
    <div className="mt-[3px] flex h-[25px] shrink-0 border-b border-[#e6e6e6]">
      {['create', 'modify', 'hierarchy', 'motion', 'display', 'utilities'].map((name, i) => (
        <button key={name} type="button" aria-label={name} className={`flex w-[29px] items-center justify-center rounded-t-[3px] border-t border-l border-t-[#e6e6e6] border-l-[#e6e6e6] border-r border-r-[#6e6e6e] ${i === 0 ? '-mb-px bg-[#c8c8c8]' : ''}`}>
          <Icon name={name} className="size-5" />
        </button>
      ))}
    </div>
    <div className="mt-2 ml-[6px] flex h-6 shrink-0">
      {['sphere', 'shapes', 'lights', 'cameras', 'helpers', 'space', 'systems'].map((name, i) => (
        <button key={name} type="button" aria-label={name} className={`flex w-6 items-center justify-center ${i === 0 ? `${SUNKEN} bg-[#efcb55]` : ''}`}>
          <Icon name={name} className={i === 0 ? 'size-5' : 'size-[18px]'} />
        </button>
      ))}
    </div>
    <Dropdown label="Object category" value="Compound Objects" className="mt-[5px] ml-[18px] w-[142px]" />
    <div className="mt-[7px] mr-[6px] ml-[2px] flex min-h-0 flex-1 overflow-hidden border-t border-l border-[#6e6e6e]">
      <div className="w-[168px] pt-[4px] pl-[1px]">
        <Rollout title="Object Type">
          <label className="mt-[1px] flex h-[14px] items-center pl-[53px] text-[#7d7d7d] [text-shadow:1px_1px_#e2e2e2]">
            AutoGrid
            <input type="checkbox" disabled className="ml-3 size-3 appearance-none border-2 border-t-[#6b747c] border-l-[#6b747c] border-b-[#ddd] border-r-[#ddd]" />
          </label>
          <div className="mx-2 mt-[3px] mb-[2px] grid grid-cols-2 gap-x-2 gap-y-[3px]">
            {objectTypes.map((name) => {
              const off = disabledTypes.includes(name);
              return (
                <button
                  key={name}
                  type="button"
                  disabled={off}
                  className={`h-[18px] whitespace-nowrap leading-4 ${name === 'Boolean' ? `${SUNKEN} bg-[#efcb55]` : RAISED} ${off ? 'text-[#7d7d7d] [text-shadow:1px_1px_#e2e2e2]' : ''}`}
                >
                  {name}
                </button>
              );
            })}
          </div>
        </Rollout>
        <Rollout title="Name and Color">
          <div className="mx-[6px] mt-[5px] mb-[6px] flex h-5 gap-1">
            <input aria-label="Object name" defaultValue="Cylinder01" className={`w-[131px] px-[1px] outline-none ${FIELD}`} />
            <button type="button" aria-label="Object color" className={`w-[17px] ${SUNKEN} bg-[#1c1cb0]`} />
          </div>
        </Rollout>
        <Rollout title="Pick Boolean">
          <button type="button" className={`mx-auto mt-[6px] mb-[6px] block h-5 w-[87px] leading-[18px] ${RAISED}`}>Pick Operand B</button>
          <div className="mb-[3px] ml-3 grid grid-cols-[79px_1fr]">
            <Radio group="pick" label="Reference" className="h-[19px]" />
            <Radio group="pick" label="Copy" className="h-[19px]" />
            <Radio group="pick" label="Move" checked className="h-[19px]" />
            <Radio group="pick" label="Instance" className="h-[19px]" />
          </div>
        </Rollout>
        <Rollout title="Parameters">
          <fieldset className="mx-1 border border-[#808080] px-[7px] pb-[5px]">
            <legend className="-ml-[1px] px-[2px] leading-[12px]">Operands</legend>
            <ul className="mt-[3px] h-8 border border-t-[#77736a] border-l-[#77736a] border-b-white border-r-white bg-[#e1e1e1] px-[2px] pt-[1px] leading-[13px]">
              <li>A: Cylinder01</li>
              <li>B: Box01</li>
            </ul>
            <label className="mt-[10px] flex h-4 items-center justify-between">
              Name:
              <input className="h-4 w-[101px] border-2 border-t-black border-l-black border-b-[#dcdcdc] border-r-[#dcdcdc] bg-[#e1e1e1]" />
            </label>
            <button type="button" disabled className={`mt-[6px] h-5 w-full leading-[18px] text-[#7d7d7d] [text-shadow:1px_1px_#e2e2e2] ${RAISED}`}>Extract Operand</button>
            <div className="mt-1 ml-3 flex h-[19px] gap-3">
              <Radio group="extract" label="Instance" checked disabled />
              <Radio group="extract" label="Copy" disabled />
            </div>
          </fieldset>
          <fieldset className="mx-1 mt-[2px] border border-[#808080] px-[7px] pb-[5px]">
            <legend className="-ml-[1px] px-[2px] leading-[12px]">Operation</legend>
            <Radio group="operation" label="Union" className="ml-1 h-[19px]" />
            <Radio group="operation" label="Intersection" className="ml-1 h-4" />
          </fieldset>
        </Rollout>
      </div>
      <div className="flex w-1 flex-col">
        <div className="h-[295px] bg-[#757575]" />
        <div className="flex-1 bg-black" />
      </div>
    </div>
    <div className="h-[5px] shrink-0" />
  </aside>
);

const Coord = ({ axis, value }: { axis: string; value: string }) => (
  <label className="flex h-[21px] w-[82px] items-center justify-end">
    {axis}:
    <input defaultValue={value} className="h-[21px] w-[58px] border-2 border-t-black border-l-black border-b-[#e6e6e6] border-r-[#e6e6e6] bg-[#e1e1e1] px-[2px] text-[#7d7d7d] outline-none" />
  </label>
);

const NavButton = ({ name, className = 'size-[18px]' }: { name: string; className?: string }) => (
  <button type="button" aria-label={name} className="flex h-[22px] w-[23px] shrink-0 items-center justify-center">
    <Icon name={name} className={className} />
  </button>
);

const StatusBar = () => (
  <footer className="flex h-[51px] shrink-0 bg-[#c5c5c5]">
    <div className="flex w-[98px] shrink-0 flex-col gap-[1px] pt-[3px]">
      <input aria-label="Macro recorder" className="h-[22px] border-2 border-t-[#77736a] border-l-[#77736a] border-b-[#f4f2e8] border-r-[#f4f2e8] bg-[#dbc3c3]" />
      <input aria-label="Listener" className="h-[22px] border-2 border-t-[#77736a] border-l-[#77736a] border-b-[#f4f2e8] border-r-[#f4f2e8] bg-white" />
    </div>
    <div className="mr-[2px] ml-1 w-[3px] border-x border-[#808080] bg-[#e0e0e0]" />
    <div className="flex min-w-0 flex-1 flex-col gap-[3px] pt-1">
      <div className="flex h-[22px]">
        <div className={`mr-[3px] flex-1 pl-[5px] leading-5 ${SUNKEN}`}>1 Object Selected</div>
        <button type="button" aria-label="Selection lock" className="flex w-5 items-center justify-center"><Icon name="lock" className="size-3" /></button>
        <button type="button" aria-label="Absolute mode" className="ml-1 flex w-[26px] items-center justify-center"><Icon name="absmode" className="size-[18px]" /></button>
        <div className="-ml-[13px] flex"><Coord axis="X" value="6,568" /><Coord axis="Y" value="-102,521" /><Coord axis="Z" value="0,0" /></div>
        <div className={`ml-[14px] w-[100px] pl-[5px] leading-5 ${SUNKEN}`}>Grid = 10,0</div>
      </div>
      <div className="flex h-[22px] gap-[2px]">
        <div className={`flex-1 pl-[5px] leading-5 ${SUNKEN}`}>Click or click-and-drag to select objects</div>
        <button type="button" className={`w-[100px] pl-[5px] text-left leading-5 ${SUNKEN}`}>Add Time Tag</button>
      </div>
    </div>
    <div className="mt-1 ml-[1px] flex h-[46px] shrink-0">
      <button type="button" aria-label="Set keys" className={`mr-[3px] flex h-11 w-[44px] items-center justify-center ${RAISED}`}><Icon name="key" /></button>
      <div className="mr-1 flex w-[47px] flex-col gap-[1px]">
        <button type="button" className={`h-[22px] whitespace-nowrap leading-5 ${RAISED}`}>Auto Key</button>
        <button type="button" className={`h-[21px] whitespace-nowrap leading-[19px] ${RAISED}`}>Set Key</button>
      </div>
      <div className="flex w-[115px] flex-col gap-[2px]">
        <Dropdown label="Key set" value="Selected" className="w-[114px]" />
        <div className="flex h-[21px]">
          <button type="button" aria-label="Tangents" className="flex w-[26px] items-center"><Icon name="tangent" className="size-5" /></button>
          <button type="button" className={`flex-1 leading-[19px] ${RAISED}`}>Key Filters...</button>
        </div>
      </div>
      <div className="ml-1 flex w-[220px] flex-col">
        <div className="flex items-center">
          <NavButton name="goStart" className="size-5" />
          <Sep />
          <NavButton name="prev" />
          <NavButton name="play" />
          <NavButton name="next" />
          <Sep />
          <NavButton name="goEnd" className="size-5" />
          <div className="ml-auto"><Sep /></div>
          <NavButton name="zoom" />
          <NavButton name="zoomAll" />
          <NavButton name="extents" />
          <NavButton name="extentsAll" />
        </div>
        <div className="flex items-center">
          <NavButton name="keymode" className="size-4" />
          <Sep />
          <input aria-label="Current frame" defaultValue="0" className="h-[21px] min-w-0 flex-1 border-2 border-t-black border-l-black border-b-[#e6e6e6] border-r-[#e6e6e6] bg-[#e1e1e1] px-[2px] outline-none" />
          <svg viewBox="0 0 10 20" className="h-5 w-3 shrink-0"><path d="M2 7l3-4 3 4zM2 13l3 4 3-4z" /></svg>
          <NavButton name="timeconfig" className="size-4" />
          <Sep />
          <NavButton name="fov" />
          <NavButton name="pan" />
          <NavButton name="orbit" />
          <NavButton name="maxview" />
        </div>
      </div>
      <div className="w-[5px]" />
    </div>
  </footer>
);

const Grip = () => <div className="my-[7px] w-1 self-stretch border-x-2 border-dotted border-[#123a9c]" />;

const Taskbar = () => (
  <nav className="flex h-[34px] shrink-0 items-center bg-[linear-gradient(#3a86ea,#2f7ae6_12%,#4a93ef_17%,#2561d8_26%,#2058d4_45%,#2562df_88%,#1a45a8)] text-white">
    <button type="button" className="flex h-[30px] w-[103px] items-center self-end rounded-r-[10px] bg-[linear-gradient(#57a557,#2f8a2f_20%,#3a9a3a_60%,#2c7c2c)] pl-[9px] shadow-[inset_-3px_0_4px_#1f641f]">
      <Icon name="flag" className="size-[21px]" />
      <span className="ml-[4px] text-[17px] font-bold italic [text-shadow:1px_1px_1px_#1a4a1a]">Inicio</span>
    </button>
    <div className="ml-[9px] flex h-full items-center pt-1">
      <Grip />
      <div className="ml-[9px] flex gap-[7px]">
        <Icon name="chrome" className="size-4" />
        <Icon name="gauge" className="size-4" />
        <Icon name="outlook" className="size-4" />
      </div>
      <span className="ml-3 self-start text-[14px] leading-[18px]">»</span>
      <div className="ml-[8px] flex self-stretch"><Grip /></div>
      <button type="button" className="ml-[5px] flex h-[25px] w-[160px] items-center rounded-[2px] border border-[#163c92] bg-[#1c4fb8] pl-[10px] shadow-[inset_1px_1px_2px_#10307c]">
        <Icon name="max" className="size-4" />
        <span className="ml-1">Untitled - Autodesk 3...</span>
      </button>
    </div>
    <div className="ml-auto flex h-full items-center pt-1">
      <Grip />
      <span className="ml-[7px] w-5 bg-[#316ac5] text-center leading-4">EN</span>
    </div>
    <div className="ml-[10px] flex h-[30px] w-[146px] items-center gap-[3px] self-end border-l border-[#0a4aa8] bg-[linear-gradient(#19b9f2,#0f96e4_20%,#1290e8_85%,#0d6cc0)] pl-[9px]">
      <Icon name="gauge" className="size-4" />
      <Icon name="tablet" className="size-4" />
      <Icon name="volume" className="size-4" />
      <span className="flex h-4 w-4 flex-col text-center text-[7px] leading-2 font-bold">
        <span className="bg-[#f6e824] text-[#10108c]">Xear</span>
        <span className="bg-[#1010c8]">3D</span>
      </span>
      <Icon name="nvidia" className="size-4" />
      <time className="ml-[3px]">11:50</time>
    </div>
  </nav>
);

const App: React.FC = () => (
  <div className="flex h-screen min-h-[600px] flex-col bg-white pt-[9px] pr-[14px] pb-[14px] pl-[9px] font-['Liberation_Sans',Arial,sans-serif] text-[11px] text-black">
    <div className="flex min-h-0 flex-1 flex-col overflow-hidden bg-[#c5c5c5] shadow-[2px_3px_11px_2px_rgba(0,0,0,0.55)]">
      <TitleBar />
      <nav className="flex h-5 shrink-0 items-center gap-[11px] border-b-2 border-white bg-[#ece9d8] pl-[5px]">
        {menus.map((m) => <button key={m} type="button" className="leading-4">{m}</button>)}
      </nav>
      <MainToolbar />
      <main className="flex min-h-0 flex-1">
        <ReactorBar />
        <div className="ml-[1px] flex min-w-0 flex-1 flex-col">
          <div className="grid min-h-0 flex-1 grid-cols-2 grid-rows-2 gap-1">
            <TopView />
            <FrontView />
            <LeftView />
            <PerspectiveView />
          </div>
          <TimeSlider />
          <TrackBar />
        </div>
        <CommandPanel />
      </main>
      <StatusBar />
      <Taskbar />
    </div>
  </div>
);

export default App;
